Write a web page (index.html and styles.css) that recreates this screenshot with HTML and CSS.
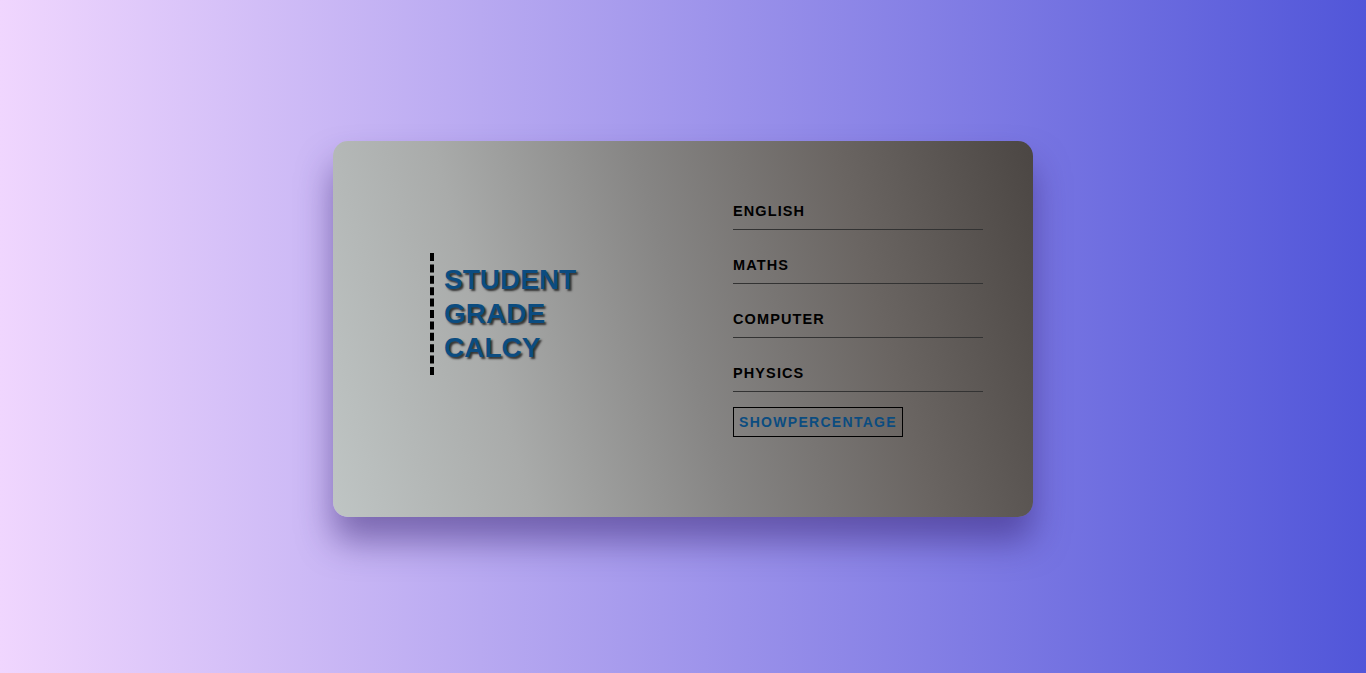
FILE: index.html
```html
<!DOCTYPE html>
<html>
<head>
<meta charset="utf-8">
<link rel="stylesheet" href="styles.css">
</head>
<body>
<div class="card">
  <div class="left">
    <h1 class="title">STUDENT<br>GRADE<br>CALCY</h1>
  </div>
  <div class="right">
    <div class="field"><span class="label">ENGLISH</span></div>
    <div class="field"><span class="label">MATHS</span></div>
    <div class="field"><span class="label">COMPUTER</span></div>
    <div class="field"><span class="label">PHYSICS</span></div>
    <button class="btn">SHOWPERCENTAGE</button>
  </div>
</div>
</body>
</html>
```
FILE: styles.css
```css
html, body { margin: 0; height: 100%; }
body {
  background: linear-gradient(to right, #f0d6fe, #5156d9);
  font-family: "Liberation Sans", Arial, sans-serif;
  display: flex;
  justify-content: center;
  align-items: flex-start;
}
.card {
  margin-top: 141px;
  width: 700px;
  height: 376px;
  border-radius: 15px;
  background: linear-gradient(75deg, #bfc5c4 0%, #a9abaa 25%, #868584 50%, #6a6562 75%, #4b4643 100%);
  box-shadow: 0 24px 34px rgba(50, 30, 110, 0.5);
  display: flex;
  box-sizing: border-box;
}
.left {
  width: 400px;
  padding-left: 97px;
  padding-top: 112px;
  box-sizing: border-box;
}
.title {
  margin: 0;
  border-left: 4px dashed #000;
  padding: 10px 0 10px 10px;
  font-size: 28px;
  line-height: 34px;
  font-weight: 900;
  color: #0b4c80;
  text-shadow: 2px 2px 2px #333;
  letter-spacing: 0;
}
.right {
  width: 250px;
  padding-top: 35px;
  display: flex;
  flex-direction: column;
  align-items: flex-start;
}
.field {
  align-self: stretch;
  padding: 26px 0 9px;
  border-bottom: 1px solid #333;
}
.label {
  display: block;
  font-size: 14.5px;
  line-height: 18px;
  font-weight: 700;
  letter-spacing: 1.1px;
  color: #000;
}
.btn {
  margin-top: 15px;
  width: 170px;
  height: 30px;
  padding: 0 0 0 5px;
  text-align: left;
  background: transparent;
  border: 1px solid #000;
  font-family: "Liberation Sans", Arial, sans-serif;
  font-size: 14px;
  font-weight: 700;
  letter-spacing: 1.3px;
  color: #0b4c80;
}
```
